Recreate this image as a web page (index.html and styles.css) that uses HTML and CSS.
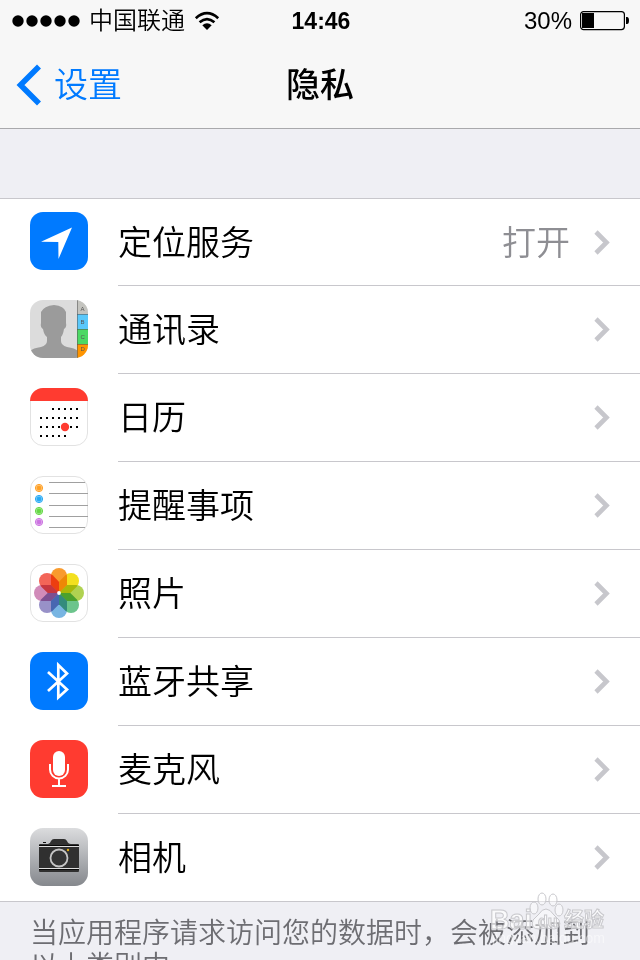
FILE: index.html
```html
<!DOCTYPE html>
<html lang="zh-CN">
<head>
<meta charset="utf-8">
<meta name="viewport" content="width=device-width, initial-scale=1">
<title>隐私</title>
<link rel="stylesheet" href="styles.css">
</head>
<body>
<svg class="defs" aria-hidden="true">
  <defs>
    <symbol id="chevron" viewBox="0 0 16 26"><path d="M2 2L12.500 12.500L2 23" fill="none" stroke="#c7c7cc" stroke-width="4.600"/></symbol>
    <clipPath id="tile"><rect width="58" height="58" rx="13"/></clipPath>
    <linearGradient id="silver" x1="0" y1="0" x2="0" y2="1"><stop offset="0" stop-color="#dbdcde"/><stop offset="1" stop-color="#85888d"/></linearGradient>
  </defs>
</svg>
<header class="top">
  <div class="status">
    <div class="carrier">
      <svg class="dots" viewBox="0 0 68 12" aria-hidden="true"><circle cx="6" cy="6" r="5.700"/><circle cx="20" cy="6" r="5.700"/><circle cx="34" cy="6" r="5.700"/><circle cx="48" cy="6" r="5.700"/><circle cx="62" cy="6" r="5.700"/></svg>
      <span>中国联通</span>
      <svg class="wifi" viewBox="0 0 26 20" aria-hidden="true"><g fill="none" stroke="#000" stroke-width="2.700"><path d="M1.800 7.200Q13-2.800 24.200 7.200"/><path d="M5.600 11.300Q13 4.800 20.400 11.300"/></g><path d="M8.300 14.200Q13 10.300 17.700 14.200L13 19Z"/></svg>
    </div>
    <time class="clock">14:46</time>
    <div class="power">
      <span>30%</span>
      <svg class="battery" viewBox="0 0 50 20" aria-hidden="true"><rect x=".6" y=".6" width="43.800" height="18" rx="3" fill="none" stroke="#000" stroke-width="1.200"/><rect x="2" y="2" width="12" height="15"/><path d="M46 6h1q2 0 2 3.500t-2 3.500h-1z"/></svg>
    </div>
  </div>
  <nav class="nav">
    <a class="back" href="#settings"><svg viewBox="0 0 26 42" aria-hidden="true"><path d="M23 2.500L4.500 21L23 39.500" fill="none" stroke="#007aff" stroke-width="5.600"/></svg><span>设置</span></a>
    <h1>隐私</h1>
  </nav>
</header>
<main>
  <ul class="list">
    <li><a class="row" href="#location">
      <svg class="icon" viewBox="0 0 58 58" aria-hidden="true"><rect width="58" height="58" rx="13" fill="#007aff"/><path d="M42 15.500L28.500 47L28.300 30L11 29.700Z" fill="#fff"/></svg>
      <span class="cell"><span class="label">定位服务</span><span class="value">打开</span><svg class="chev"><use href="#chevron"/></svg></span></a></li>
    <li><a class="row" href="#contacts">
      <svg class="icon" viewBox="0 0 58 58" aria-hidden="true"><g clip-path="url(#tile)"><rect width="58" height="58" fill="#dcdcdc"/><path d="M0 51Q3 48 11 47Q17 45 17 41V37Q14 35 13 29Q10 27 11 23L11 12Q14 6 24 5Q34 6 36 12V23Q37 27 34 29Q33 35 31 37V41Q31 45 37 47Q45 48 48 51V58H0Z" fill="#9b9b9b"/><rect x="47" width="11" height="14" fill="#c4c4bf"/><rect x="47" y="14" width="11" height="15" fill="#5ac8fa"/><rect x="47" y="29" width="11" height="15" fill="#4cd964"/><rect x="47" y="44" width="11" height="14" fill="#ff9500"/><path d="M47.500 0V58M47 14.500H58M47 29.500H58M47 44.500H58" stroke="#555" stroke-opacity=".55"/><g class="tabs"><text x="50.500" y="11">A</text><text x="50.500" y="24">B</text><text x="50.500" y="39">C</text><text x="50.500" y="51">D</text></g></g></svg>
      <span class="cell"><span class="label">通讯录</span><svg class="chev"><use href="#chevron"/></svg></span></a></li>
    <li><a class="row" href="#calendar">
      <svg class="icon" viewBox="0 0 58 58" aria-hidden="true"><rect x=".5" y=".5" width="57" height="57" rx="12.500" fill="#fff" stroke="#e2e2e2"/><g clip-path="url(#tile)"><rect width="58" height="13" fill="#ff3b30"/></g><g stroke="#000" stroke-width="2" stroke-dasharray="2 4"><path d="M22 21H48M10 30H48M10 39H48M10 48H36"/></g><circle cx="35" cy="39" r="4.200" fill="#ff3b30"/></svg>
      <span class="cell"><span class="label">日历</span><svg class="chev"><use href="#chevron"/></svg></span></a></li>
    <li><a class="row" href="#reminders">
      <svg class="icon" viewBox="0 0 58 58" aria-hidden="true"><rect x=".5" y=".5" width="57" height="57" rx="12.500" fill="#fff" stroke="#e2e2e2"/><path d="M19 6.500H55M19 17.500H58M19 29.500H58M19 40.500H58M19 51.500H55" stroke="#a0a0a0"/>
        <g fill="#ff9f22" stroke="#ff9f22"><circle cx="9" cy="12" r="3.600" fill-opacity=".5"/><circle cx="9" cy="12" r="2"/></g>
        <g fill="#25a9f5" stroke="#25a9f5"><circle cx="9" cy="23" r="3.600" fill-opacity=".5"/><circle cx="9" cy="23" r="2"/></g>
        <g fill="#64d843" stroke="#64d843"><circle cx="9" cy="35" r="3.600" fill-opacity=".5"/><circle cx="9" cy="35" r="2"/></g>
        <g fill="#cc73e1" stroke="#cc73e1"><circle cx="9" cy="46" r="3.600" fill-opacity=".5"/><circle cx="9" cy="46" r="2"/></g></svg>
      <span class="cell"><span class="label">提醒事项</span><svg class="chev"><use href="#chevron"/></svg></span></a></li>
    <li><a class="row" href="#photos">
      <svg class="icon" viewBox="0 0 58 58" aria-hidden="true"><defs><path id="petal" d="M21 12A8 8 0 0 1 37 12V21L29 29L21 21Z"/></defs><rect x=".5" y=".5" width="57" height="57" rx="12.500" fill="#fff" stroke="#e2e2e2"/>
        <g class="petals"><use href="#petal" fill="#f99b2d"/><use href="#petal" fill="#f3e01f" transform="rotate(45 29 29)"/><use href="#petal" fill="#b0d251" transform="rotate(90 29 29)"/><use href="#petal" fill="#6cc48c" transform="rotate(135 29 29)"/><use href="#petal" fill="#78b5e2" transform="rotate(180 29 29)"/><use href="#petal" fill="#9891c8" transform="rotate(225 29 29)"/><use href="#petal" fill="#d18bb9" transform="rotate(270 29 29)"/><use href="#petal" fill="#f36558" transform="rotate(315 29 29)"/></g><circle cx="29" cy="29" r="1.900" fill="#fff"/></svg>
      <span class="cell"><span class="label">照片</span><svg class="chev"><use href="#chevron"/></svg></span></a></li>
    <li><a class="row" href="#bluetooth">
      <svg class="icon" viewBox="0 0 58 58" aria-hidden="true"><rect width="58" height="58" rx="13" fill="#007aff"/><path d="M18 20L37 37.500L28.300 45.500V13L37 21.500L18 39" fill="none" stroke="#fff" stroke-width="2.700"/></svg>
      <span class="cell"><span class="label">蓝牙共享</span><svg class="chev"><use href="#chevron"/></svg></span></a></li>
    <li><a class="row" href="#microphone">
      <svg class="icon" viewBox="0 0 58 58" aria-hidden="true"><rect width="58" height="58" rx="13" fill="#ff3b30"/><rect x="23" y="11" width="12" height="25" rx="6" fill="#fff"/><path d="M20 24V29.500A9 9 0 0 0 38 29.500V24M29 39V46M22 46H36" fill="none" stroke="#fff" stroke-width="2"/></svg>
      <span class="cell"><span class="label">麦克风</span><svg class="chev"><use href="#chevron"/></svg></span></a></li>
    <li><a class="row" href="#camera">
      <svg class="icon" viewBox="0 0 58 58" aria-hidden="true"><rect width="58" height="58" rx="13" fill="url(#silver)"/><path d="M9 17Q9 16 10 16H18Q20 16 21 13Q22 11 24 11H34Q36 11 37 13Q38 16 41 16H48Q49 16 49 17V43Q49 44 48 44H10Q9 44 9 43Z" fill="#303030"/><path d="M13 14.500H16" stroke="#111"/><path d="M9 18.500H49M9 40.500H49" stroke="#ddd"/><path d="M9 17.500H49M9 41.500H49" stroke="#080808"/><circle cx="29" cy="30" r="8.500" fill="#333" stroke="#c5c5c5" stroke-width="1.800"/><circle cx="38" cy="22" r="1.200" fill="#e2ad13"/></svg>
      <span class="cell"><span class="label">相机</span><svg class="chev"><use href="#chevron"/></svg></span></a></li>
  </ul>
  <p class="note">当应用程序请求访问您的数据时，会被添加到以上类别中。</p>
</main>
<svg class="watermark" viewBox="0 0 120 56" aria-hidden="true">
  <g fill="#fff" fill-opacity=".45" stroke="#c8c8cc" stroke-width="1">
    <ellipse cx="46" cy="19" rx="4" ry="6"/><ellipse cx="54" cy="10" rx="4" ry="6"/><ellipse cx="65" cy="11" rx="4" ry="6"/><ellipse cx="71" cy="21" rx="4" ry="6"/>
    <path d="M58 20Q62 20 66 26L71 31Q74 39 66 40Q58 38 51 40Q42 40 45 31Q48 28 51 25Q54 20 58 20Z"/>
  </g>
  <g class="mark"><text x="2" y="40" class="latin">Bai</text><text x="50" y="38" class="du">du</text><text x="76" y="38" class="cjk">经验</text></g>
  <text x="4" y="54" class="url">jingyan.baidu.com</text>
</svg>
</body>
</html>
```
FILE: styles.css
```css
* { box-sizing: border-box; }
body {
  display: flex;
  flex-direction: column;
  height: 100vh;
  margin: 0;
  overflow: hidden;
  position: relative;
  background: #efeff4;
  color: #000;
  font-family: "Liberation Sans", "Noto Sans CJK SC", sans-serif;
  font-weight: 350;
}
.defs { position: absolute; width: 0; height: 0; }
a { color: inherit; text-decoration: none; }
svg { display: block; flex: none; }
.top { flex: none; background: #f7f7f7; border-bottom: 1px solid #a9a9ac; }
.status {
  display: grid;
  grid-template-columns: 1fr auto 1fr;
  align-items: center;
  height: 42px;
  padding: 0 10px 0 12px;
  font-size: 24px;
  line-height: 42px;
}
.carrier, .power { display: flex; align-items: center; }
.carrier { gap: 9px; }
.power { justify-content: flex-end; gap: 8px; }
.dots { width: 68px; height: 12px; }
.wifi { width: 26px; height: 20px; }
.battery { width: 50px; height: 20px; }
.clock { font-size: 23px; font-weight: 700; }
.nav {
  display: grid;
  grid-template-columns: 1fr auto 1fr;
  align-items: center;
  height: 86px;
  padding: 0 16px;
  font-size: 34px;
  line-height: 48px;
}
.back { display: flex; align-items: center; gap: 12px; color: #007aff; }
.back svg { width: 26px; height: 42px; }
h1 { margin: 0; font-size: 34px; font-weight: 500; }
main { flex: 1; min-height: 0; overflow: hidden; padding-top: 69px; }
.list {
  margin: 0;
  padding: 0;
  list-style: none;
  background: #fff;
  border-top: 1px solid #c8c7cc;
  border-bottom: 1px solid #c8c7cc;
}
.row { display: flex; align-items: flex-end; gap: 30px; padding-left: 30px; }
.icon { width: 58px; height: 58px; margin-bottom: 16px; }
.cell {
  display: flex;
  flex: 1;
  align-items: center;
  height: 88px;
  padding-top: 1px;
  padding-right: 30px;
  border-bottom: 1px solid #c8c7cc;
  font-size: 34px;
  line-height: 48px;
}
.list li:first-child .cell, .list li:last-child .cell { height: 87px; }
li:last-child .cell { border-bottom: 0; }
li:last-child .icon { margin-bottom: 15px; }
.label { flex: 1; }
.value { margin-right: 24px; color: #8e8e93; }
.chev { width: 16px; height: 26px; }
.note {
  margin: 0;
  padding: 15px 30px;
  color: #6d6d72;
  font-size: 28px;
  line-height: 33px;
}
.tabs { fill: #555; font-size: 6px; }
.petals { isolation: isolate; }
.petals use { mix-blend-mode: multiply; }
.watermark { position: absolute; right: 32px; bottom: 15px; width: 120px; height: 56px; }
.mark {
  fill: #fff;
  fill-opacity: 0.65;
  stroke: #c8c8cc;
  stroke-width: 1px;
  font-weight: 700;
}
.latin { font-size: 27px; }
.du { font-size: 16px; }
.cjk { font-size: 20px; }
.url { fill: #fff; fill-opacity: 0.5; font-size: 14px; }
```
